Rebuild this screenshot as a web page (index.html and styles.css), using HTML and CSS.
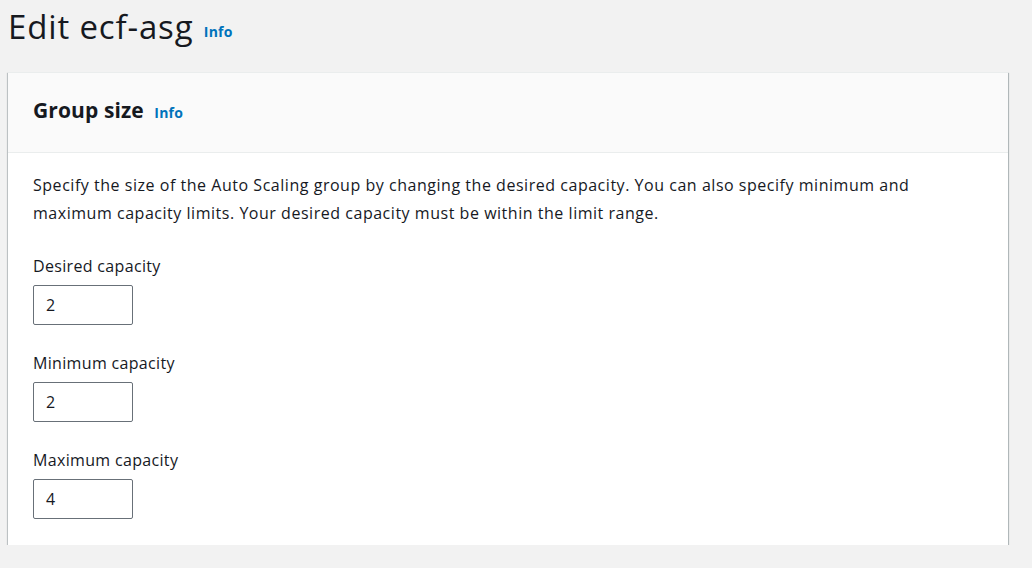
FILE: index.html
```html
<!DOCTYPE html>
<html>
<head>
<meta charset="utf-8">
<link rel="stylesheet" href="styles.css">
</head>
<body>
<div class="page">
  <h1 class="title">Edit ecf-asg <a class="info info-title" href="#">Info</a></h1>
  <div class="card">
    <div class="card-header">
      <h2 class="card-title">Group size <a class="info info-card" href="#">Info</a></h2>
    </div>
    <div class="card-body">
      <p class="desc">Specify the size of the Auto Scaling group by changing the desired capacity. You can also specify minimum and maximum capacity limits. Your desired capacity must be within the limit range.</p>
      <div class="field">
        <label class="label">Desired capacity</label>
        <div class="input">2</div>
      </div>
      <div class="field">
        <label class="label">Minimum capacity</label>
        <div class="input">2</div>
      </div>
      <div class="field">
        <label class="label">Maximum capacity</label>
        <div class="input">4</div>
      </div>
    </div>
  </div>
</div>
</body>
</html>
```
FILE: styles.css
```css
html, body {
  margin: 0;
  padding: 0;
  background: #f2f2f2;
  font-family: "Open Sans", "Noto Sans", sans-serif;
  color: #16191f;
}
.page {
  padding: 0 24px 0 8px;
}
.title {
  margin: 0;
  padding-top: 5px;
  height: 67px;
  font-size: 33px;
  font-weight: 400;
  letter-spacing: 0.85px;
  line-height: 44px;
  color: #16191f;
}
.info {
  color: #0073bb;
  text-decoration: none;
  font-weight: 700;
  letter-spacing: 0.2px;
}
.info-title {
  font-size: 14px;
  margin-left: 1px;
  vertical-align: 2px;
}
.card {
  background: #fff;
  width: 1000px;
  box-shadow: 0 1px 1px 0 rgba(0,28,36,0.5), 1px 1px 1px 0 rgba(0,28,36,0.2), -1px 1px 1px 0 rgba(0,28,36,0.15);
  border-top: 1px solid #eaeded;
}
.card-header {
  background: #fafafa;
  border-bottom: 1px solid #eaeded;
  height: 80px;
  display: flex;
  align-items: center;
  padding-left: 25px;
  padding-bottom: 5px;
  box-sizing: border-box;
}
.card-title {
  margin: 0;
  font-size: 21px;
  font-weight: 700;
  letter-spacing: 0.1px;
}
.info-card {
  font-size: 14px;
  margin-left: 5px;
}
.card-body {
  padding: 18px 25px 26px;
}
.desc {
  margin: 0 0 29px;
  font-size: 16px;
  letter-spacing: 0.53px;
  line-height: 28px;
  max-width: 920px;
}
.field {
  margin-bottom: 28px;
}
.field:last-child {
  margin-bottom: 0;
}
.label {
  display: block;
  font-size: 16px;
  letter-spacing: 0.33px;
  line-height: 20px;
  margin-bottom: 9px;
}
.input {
  box-sizing: border-box;
  width: 100px;
  height: 40px;
  border: 1px solid #687078;
  border-radius: 2px;
  padding: 0 12px;
  line-height: 38px;
  font-size: 16px;
}
```
